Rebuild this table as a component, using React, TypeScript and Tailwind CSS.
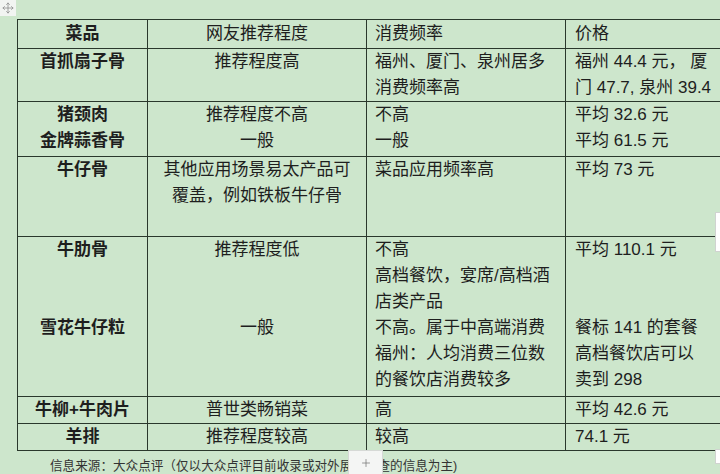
import { Move, Plus } from "lucide-react";
import type { ReactNode } from "react";

type Row = {
  h: string;
  name: ReactNode;
  rec: ReactNode;
  freq: ReactNode;
  price: ReactNode;
};

const rows: Row[] = [
  {
    h: "h-[52px]",
    name: "首抓扇子骨",
    rec: "推荐程度高",
    freq: (
      <>
        福州、厦门、泉州居多
        <br />
        消费频率高
      </>
    ),
    price: (
      <>
        福州 44.4 元， 厦
        <br />门 47.7, 泉州 39.4
      </>
    ),
  },
  {
    h: "h-[55px]",
    name: (
      <>
        猪颈肉
        <br />
        金牌蒜香骨
      </>
    ),
    rec: (
      <>
        推荐程度不高
        <br />
        一般
      </>
    ),
    freq: (
      <>
        不高
        <br />
        一般
      </>
    ),
    price: (
      <>
        平均 32.6 元
        <br />
        平均 61.5 元
      </>
    ),
  },
  {
    h: "h-[80px]",
    name: "牛仔骨",
    rec: (
      <>
        其他应用场景易太产品可
        <br />
        覆盖，例如铁板牛仔骨
      </>
    ),
    freq: "菜品应用频率高",
    price: "平均 73 元",
  },
  {
    h: "h-[160px]",
    name: (
      <>
        牛肋骨
        <br />
        <br />
        <br />
        雪花牛仔粒
      </>
    ),
    rec: (
      <>
        推荐程度低
        <br />
        <br />
        <br />
        一般
      </>
    ),
    freq: (
      <>
        不高
        <br />
        高档餐饮，宴席/高档酒
        <br />
        店类产品
        <br />
        不高。属于中高端消费
        <br />
        福州：人均消费三位数
        <br />
        的餐饮店消费较多
      </>
    ),
    price: (
      <>
        平均 110.1 元
        <br />
        <br />
        <br />
        餐标 141 的套餐
        <br />
        高档餐饮店可以
        <br />
        卖到 298
      </>
    ),
  },
  { h: "h-[27px]", name: "牛柳+牛肉片", rec: "普世类畅销菜", freq: "高", price: "平均 42.6 元" },
  { h: "h-[26px]", name: "羊排", rec: "推荐程度较高", freq: "较高", price: "74.1 元" },
];

export default function App() {
  return (
    <div className="relative w-[720px] h-[474px] overflow-hidden bg-[#cde6cc] text-[#1e1e1e] font-['Liberation_Sans','Noto_Sans_CJK_SC',sans-serif]">
      {/* move handle */}
      <div className="absolute left-0 top-0 w-[16px] h-[16px] bg-[#f2f4f2] flex items-center justify-center">
        <Move size={12} strokeWidth={1.5} className="text-[#8a8a8a]" />
      </div>

      <table className="table-fixed border-collapse ml-[17px] mt-[19px] w-[740px] text-[17px] leading-[26px]">
        <colgroup>
          <col className="w-[130px]" />
          <col className="w-[219px]" />
          <col className="w-[199px]" />
          <col className="w-[192px]" />
        </colgroup>
        <thead>
          <tr className="h-[29px]">
            <th className="border border-[#2a382c] font-bold text-center align-top pt-[1px]">菜品</th>
            <th className="border border-[#2a382c] font-normal text-center align-top pt-[1px]">网友推荐程度</th>
            <th className="border border-[#2a382c] font-normal text-left align-top pt-[1px] pl-2">消费频率</th>
            <th className="border border-[#2a382c] font-normal text-left align-top pt-[1px] pl-[9px]">价格</th>
          </tr>
        </thead>
        <tbody>
          {rows.map((r, i) => (
            <tr key={i} className={r.h}>
              <td className="border border-[#2a382c] font-bold text-center align-top">{r.name}</td>
              <td className="border border-[#2a382c] text-center align-top">{r.rec}</td>
              <td className="border border-[#2a382c] text-left align-top pl-2">{r.freq}</td>
              <td className="border border-[#2a382c] text-left align-top pl-[9px] whitespace-nowrap">{r.price}</td>
            </tr>
          ))}
        </tbody>
      </table>

      <div className="ml-[50px] mt-[5px] text-[12.6px] leading-[20px] text-[#333] whitespace-nowrap">
        信息来源：大众点评（仅以大众点评目前收录或对外展示可查的信息为主)
      </div>

      {/* add-row handle */}
      <div className="absolute left-[348px] top-[450px] w-[35px] h-[26px] bg-[#f4f5f4] border border-[#d6d9d6] flex items-center justify-center">
        <Plus size={12} strokeWidth={1.5} className="text-[#777]" />
      </div>

      {/* right edge handles */}
      <div className="absolute left-[715px] top-[212px] w-[8px] h-[40px] bg-white border border-[#d0d3d0]" />
      <div className="absolute left-[715px] top-[449px] w-[8px] h-[15px] bg-white border border-[#d0d3d0]" />
    </div>
  );
}
